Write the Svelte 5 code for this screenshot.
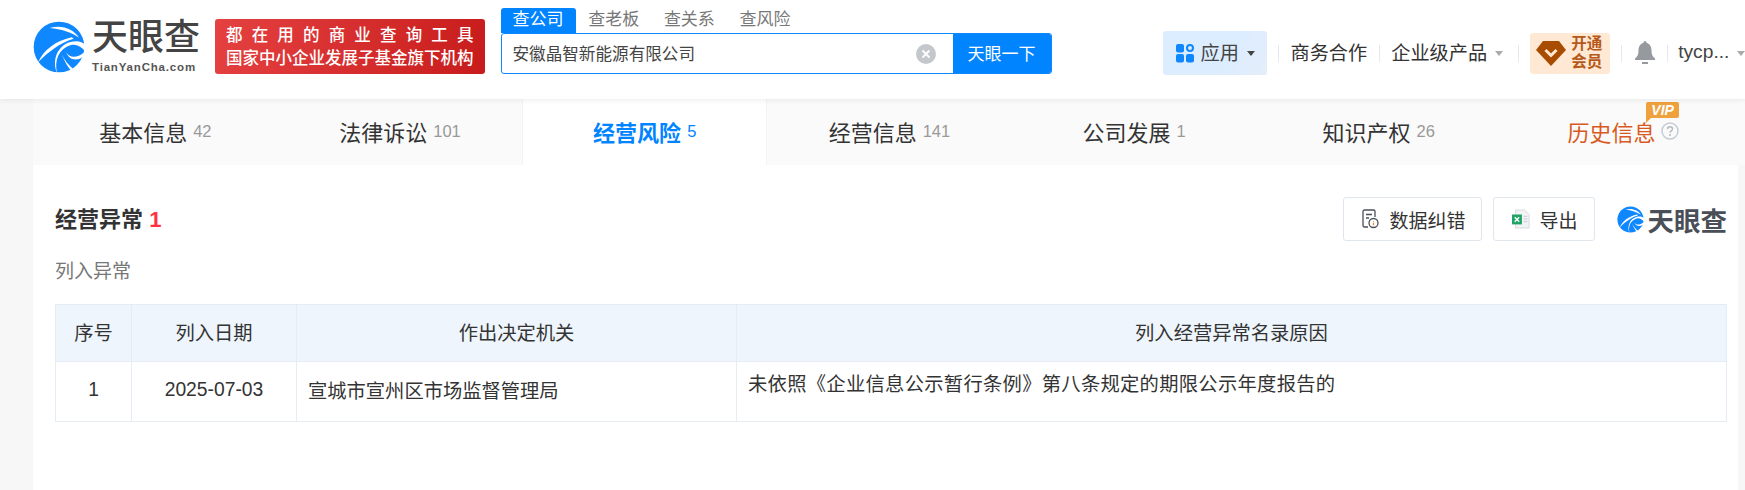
<script>
  const tabs = [
    { label: '基本信息', count: '42' },
    { label: '法律诉讼', count: '101' },
    { label: '经营风险', count: '5', active: true },
    { label: '经营信息', count: '141' },
    { label: '公司发展', count: '1' },
    { label: '知识产权', count: '26' },
    { label: '历史信息', vip: true }
  ];
  const searchTabs = ['查公司', '查老板', '查关系', '查风险'];
</script>

{#snippet swirl(size)}
  <svg class="swirl" width={size} height={size} viewBox="0 0 180 180">
    <circle cx="90" cy="90" r="76" fill="#0f87ff" />
    <path d="M62 33C98 22 134 36 150 62C128 46 96 36 62 33Z" fill="#fff" />
    <path d="M27 136C44 100 78 72 128 61L134 65C92 78 58 104 27 136Z" fill="#fff" />
    <path d="M84 168C76 130 88 96 126 84C142 80 156 88 168 102L172 84C158 72 142 70 124 75C86 86 68 128 84 168Z" fill="#fff" />
    <path d="M98 112C106 132 116 150 128 163L136 159C120 146 106 130 98 112Z" fill="#fff" />
    <path d="M112 106C120 122 142 126 166 106L162 120C142 134 118 128 112 106Z" fill="#fff" />
  </svg>
{/snippet}

<div class="page">
  <header class="topbar">
    <div class="logo">
      {@render swirl(60)}
      <div class="logo-text">
        <div class="logo-cn">天眼查</div>
        <div class="logo-en">TianYanCha.com</div>
      </div>
    </div>

    <div class="banner">
      <div class="banner-top">都在用的商业查询工具</div>
      <div class="banner-bottom">国家中小企业发展子基金旗下机构</div>
    </div>

    <div class="search">
      <div class="search-tabs">
        {#each searchTabs as t, i}
          <span class="search-tab" class:on={i === 0}>{t}</span>
        {/each}
      </div>
      <div class="search-box">
        <span class="search-value">安徽晶智新能源有限公司</span>
        <span class="clear">
          <svg width="20" height="20" viewBox="0 0 20 20">
            <circle cx="10" cy="10" r="10" fill="#c4c7cc" />
            <path d="M6.5 6.5l7 7M13.5 6.5l-7 7" stroke="#fff" stroke-width="1.8" />
          </svg>
        </span>
        <span class="search-btn">天眼一下</span>
      </div>
    </div>

    <nav class="nav">
      <div class="app-btn">
        <svg width="18" height="20" viewBox="0 0 18 20">
          <rect x="0" y="1" width="8" height="8.5" rx="2" fill="#0f87ff" />
          <circle cx="14" cy="5" r="3" fill="none" stroke="#0f87ff" stroke-width="2" />
          <rect x="0" y="11" width="8" height="8.5" rx="2" fill="#0f87ff" />
          <rect x="10" y="11" width="8" height="8.5" rx="2" fill="#0f87ff" />
        </svg>
        <span class="app-label">应用</span>
        <i class="caret dark"></i>
      </div>
      <i class="sep first"></i>
      <span class="nav-link">商务合作</span>
      <i class="sep mid"></i>
      <span class="nav-link">企业级产品</span>
      <i class="caret"></i>
      <i class="sep wide"></i>
      <div class="vip-btn">
        <svg width="30" height="26" viewBox="0 0 30 26">
          <path d="M7 1h16l7 9-15 16L0 10Z" fill="#a84c00" />
          <path d="M9.5 10l5.5 5.5L20.5 10" fill="none" stroke="#ffe9d4" stroke-width="3" />
        </svg>
        <div class="vip-text"><span>开通</span><span>会员</span></div>
      </div>
      <i class="sep after-vip"></i>
      <svg class="bell" width="20" height="24" viewBox="0 0 20 24">
        <path d="M10 0c1 0 1.500.8 1.500 1.800C15 2.800 16.500 6 16.500 9.500c0 4 1 6 3.500 8V19H0v-1.500c2.500-2 3.500-4 3.500-8C3.500 6 5 2.800 8.500 1.800 8.500.8 9 0 10 0Z" fill="#96999e" />
        <rect x="7" y="21" width="6" height="2" fill="#96999e" />
      </svg>
      <i class="sep last"></i>
      <span class="user">tycp...</span>
      <i class="caret"></i>
    </nav>
  </header>

  <main class="main">
    <div class="tabs">
      {#each tabs as tab}
        <div class="tab" class:active={tab.active} class:vip={tab.vip}>
          <span class="tab-label">{tab.label}</span>
          {#if tab.count}<span class="tab-count">{tab.count}</span>{/if}
          {#if tab.vip}
            <svg class="help" width="18" height="18" viewBox="0 0 18 18">
              <circle cx="9" cy="9" r="8" fill="none" stroke="#c3ccd6" stroke-width="1.500" />
              <path d="M6.500 7.200C6.500 5.700 7.600 4.800 9 4.800s2.500.9 2.500 2.200c0 1.900-2.500 1.900-2.500 3.800" fill="none" stroke="#b4b8bd" stroke-width="1.400" />
              <circle cx="9" cy="13" r="1" fill="#b4b8bd" />
            </svg>
            <span class="vip-tag">VIP</span>
          {/if}
        </div>
      {/each}
    </div>

    <section class="content">
      <div class="section-head">
        <h2 class="section-title">经营异常 <em>1</em></h2>
        <div class="actions">
          <button class="btn">
            <svg width="17" height="20" viewBox="0 0 17 20">
              <path d="M6 18H2.500A1.500 1.500 0 0 1 1 16.500V2.500A1.500 1.500 0 0 1 2.500 1h9A1.500 1.500 0 0 1 13 2.500V8" fill="none" stroke="#4a5058" stroke-width="1.300" />
              <path d="M4 5.500h6M4 9h3" stroke="#4a5058" stroke-width="1.300" />
              <circle cx="11.500" cy="14" r="4.500" fill="none" stroke="#4a5058" stroke-width="1.300" />
              <path d="M11.500 12v.8M11.500 13.800v2.400" stroke="#e08a2e" stroke-width="1.300" />
            </svg>
            <span class="wide-gap">数据纠错</span>
          </button>
          <button class="btn">
            <svg width="18" height="20" viewBox="0 0 20 22">
              <path d="M4 1h10l5 5v15H4Z" fill="#f2f3f5" stroke="#d4d7dc" />
              <path d="M13 8h4M13 11h4M13 14h4" stroke="#c3c7cd" />
              <rect x="0" y="6" width="11" height="11" fill="#21a366" />
              <path d="M3 9l5 5M8 9l-5 5" stroke="#fff" stroke-width="1.500" />
            </svg>
            导出
          </button>
          <div class="mini-logo">
            {@render swirl(31)}
            <span>天眼查</span>
          </div>
        </div>
      </div>

      <div class="sub-title">列入异常</div>

      <table class="grid">
        <thead>
          <tr>
            <th class="c-no">序号</th>
            <th class="c-date">列入日期</th>
            <th class="c-org">作出决定机关</th>
            <th>列入经营异常名录原因</th>
          </tr>
        </thead>
        <tbody>
          <tr>
            <td class="center">1</td>
            <td class="center">2025-07-03</td>
            <td>宣城市宣州区市场监督管理局</td>
            <td class="reason">未依照《企业信息公示暂行条例》第八条规定的期限公示年度报告的</td>
          </tr>
        </tbody>
      </table>
    </section>
  </main>
</div>

<style>
  :global(body) {
    margin: 0;
    background: #f7f7f7;
  }

  .page {
    width: 1745px;
    height: 490px;
    overflow: hidden;
    font-family: "Liberation Sans", "Noto Sans CJK SC", sans-serif;
    color: #333;
    background: #f7f7f7;
  }

  .topbar {
    position: relative;
    z-index: 2;
    height: 99px;
    display: flex;
    background: #fff;
    box-shadow: 0 1px 6px rgba(0, 0, 0, 0.08);
  }

  .logo {
    display: flex;
    flex: 0 0 186px;
    margin-left: 29px;
    padding-top: 17px;
    box-sizing: border-box;
  }

  .swirl {
    flex-shrink: 0;
  }

  .logo-text {
    margin-left: 3px;
    margin-top: 1px;
  }

  .logo-cn {
    font-size: 36px;
    line-height: 40px;
    font-weight: 500;
    color: #444;
  }

  .logo-en {
    font-size: 11.5px;
    font-weight: 700;
    line-height: 14px;
    letter-spacing: 0.82px;
    color: #555;
    margin-top: 2px;
    white-space: nowrap;
  }

  .banner {
    flex: 0 0 269px;
    height: 55px;
    margin-top: 19px;
    padding: 5px 11px 0;
    box-sizing: border-box;
    border-radius: 3px;
    background: linear-gradient(100deg, #e54141, #c81c1c);
    color: #fff;
    font-size: 16.500px;
    font-weight: 500;
    line-height: 22px;
  }

  .banner-top {
    text-align: justify;
    text-align-last: justify;
    margin-bottom: 1px;
  }

  .banner-bottom {
    text-align: justify;
    text-align-last: justify;
    white-space: nowrap;
  }

  .search {
    flex: 0 0 551px;
    margin-left: 16px;
    margin-top: 8px;
  }

  .search-tabs {
    display: flex;
    height: 25px;
  }

  .search-tab {
    padding: 0 12px;
    margin-right: 0.7px;
    font-size: 17px;
    line-height: 24px;
    color: #777;
  }

  .search-tab.on {
    color: #fff;
    background: #0084ff;
    border-radius: 3px 3px 0 0;
  }

  .search-box {
    display: flex;
    align-items: center;
    height: 41px;
    box-sizing: border-box;
    border: 1px solid #0f87ff;
    border-radius: 3px;
    overflow: hidden;
  }

  .search-value {
    flex: 1;
    padding-left: 11px;
    padding-bottom: 2px;
    font-size: 16.600px;
    color: #444;
  }

  .clear {
    display: flex;
    margin-right: 17px;
  }

  .search-btn {
    align-self: stretch;
    display: flex;
    align-items: center;
    justify-content: center;
    width: 98px;
    padding-bottom: 2px;
    box-sizing: border-box;
    color: #fff;
    font-size: 17px;
    background: #0084ff;
  }

  .nav {
    display: flex;
    align-items: center;
    flex-shrink: 0;
    margin-left: 111px;
    height: 106px;
    white-space: nowrap;
    font-size: 19.200px;
    color: #333;
  }

  .nav-link,
  .app-label,
  .user {
    padding-bottom: 2px;
  }

  .app-btn {
    display: flex;
    align-items: center;
    width: 104px;
    height: 44px;
    padding-left: 13px;
    box-sizing: border-box;
    border-radius: 3px;
    background: linear-gradient(120deg, #dcedff 60%, #e4edfa);
  }

  .app-label {
    margin-left: 7px;
    color: #444;
  }

  .caret {
    display: block;
    width: 0;
    height: 0;
    margin-left: 8px;
    border: 4.500px solid transparent;
    border-top: 5px solid #aaa;
    border-bottom: 0;
  }

  .caret.dark {
    border-top-color: #444;
  }

  .sep {
    display: block;
    width: 1px;
    height: 17px;
    margin: 0 12px;
    background: #e6e8ec;
  }

  .sep.first {
    margin-left: 11px;
  }

  .sep.mid {
    margin-right: 11px;
  }

  .sep.wide {
    margin: 0 11px 0 15px;
  }

  .sep.after-vip {
    margin: 0 11px;
  }

  .sep.last {
    margin-right: 10px;
  }

  .vip-btn {
    display: flex;
    align-items: center;
    width: 80px;
    height: 41px;
    padding-left: 6px;
    box-sizing: border-box;
    border-radius: 3px;
    background: #ffe9d4;
  }

  .vip-text {
    display: flex;
    flex-direction: column;
    margin-left: 5px;
    font-size: 15.500px;
    line-height: 18px;
    font-weight: 700;
    color: #b5581a;
  }

  .bell {
    margin-left: 2px;
  }

  .user {
    color: #444;
  }

  .main {
    margin-left: 33px;
  }

  .tabs {
    display: flex;
    width: 1712.900px;
    height: 66px;
    background: #fafafa;
  }

  .tab {
    position: relative;
    flex: 0 0 244.700px;
    display: flex;
    align-items: center;
    justify-content: center;
    box-sizing: border-box;
    gap: 6px;
    padding-bottom: 3px;
    font-size: 22px;
    color: #333;
  }

  .tab-count {
    margin-top: 2px;
    font-size: 16.500px;
    color: #999;
  }

  .tab.active {
    background: #fff;
    color: #0084ff;
    font-weight: 700;
    border-left: 1px solid #f3f3f3;
    border-right: 1px solid #f3f3f3;
  }

  .tab.active .tab-count {
    color: #0084ff;
    font-weight: 400;
  }

  .tab.vip {
    color: #d85a1f;
  }

  .vip-tag {
    position: absolute;
    left: 145px;
    top: 3px;
    width: 33px;
    height: 16px;
    border-radius: 2px 2px 2px 0;
    background: #eea13c;
    color: #fff;
    font-size: 14px;
    line-height: 16px;
    font-weight: 700;
    font-style: italic;
    text-align: center;
  }

  .vip-tag::after {
    content: '';
    position: absolute;
    left: 0;
    top: 16px;
    border-top: 5px solid #eea13c;
    border-right: 5px solid transparent;
  }

  .content {
    width: 1705px;
    height: 325px;
    box-sizing: border-box;
    padding: 32px 11px 0 22px;
    background: #fff;
  }

  .section-head {
    display: flex;
    align-items: center;
    justify-content: space-between;
    height: 44px;
  }

  .section-title {
    margin: 0;
    padding-bottom: 4px;
    font-size: 22px;
    font-weight: 700;
    color: #333;
  }

  .section-title em {
    font-style: normal;
    color: #ff3341;
  }

  .actions {
    display: flex;
    align-items: center;
  }

  .btn {
    display: flex;
    align-items: center;
    gap: 9px;
    height: 44px;
    padding: 0 16px 0 18px;
    margin-right: 11px;
    border: 1px solid #e0e6ee;
    border-radius: 3px;
    background: #fff;
    font: inherit;
    font-size: 19px;
    color: #333;
  }

  .wide-gap {
    margin-left: 1px;
  }

  .mini-logo {
    display: flex;
    align-items: center;
    gap: 2px;
    margin-left: 9px;
    font-size: 26.500px;
    font-weight: 700;
    color: #4a4f57;
  }

  .sub-title {
    margin-top: 18px;
    font-size: 19px;
    line-height: 26px;
    color: #777;
  }

  .grid {
    width: 100%;
    margin-top: 19px;
    border-collapse: collapse;
    table-layout: fixed;
    font-size: 19.300px;
    color: #333;
  }

  .grid th,
  .grid td {
    box-sizing: border-box;
    border: 1px solid #e5ecf3;
    font-weight: 400;
  }

  .grid th {
    height: 57px;
    padding: 0 0 3px;
    background: #eef5fc;
  }

  .grid td {
    height: 60px;
    padding: 0 11px 3px;
  }

  .c-no {
    width: 76px;
  }

  .c-date {
    width: 165px;
  }

  .c-org {
    width: 440px;
  }

  .center {
    text-align: center;
  }

  .reason {
    vertical-align: top;
    padding-top: 10px !important;
    line-height: 26px;
    letter-spacing: 0.3px;
  }
</style>
